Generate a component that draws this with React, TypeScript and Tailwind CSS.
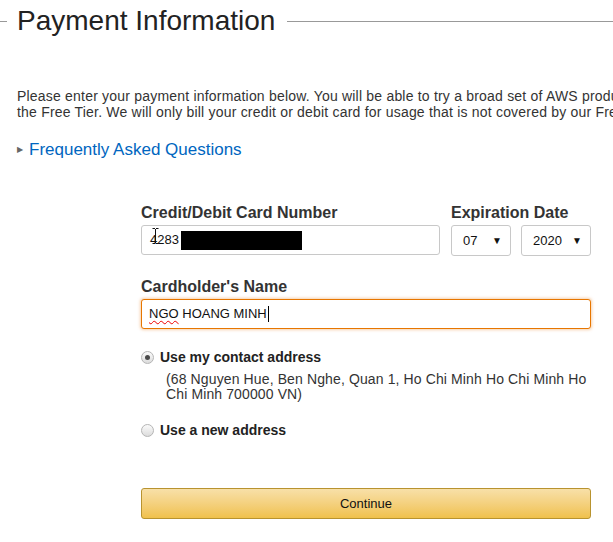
import React from "react";

function Radio({ checked }: { checked?: boolean }) {
  return (
    <span className="flex h-[13px] w-[13px] shrink-0 items-center justify-center rounded-full border border-[#b5b5b5] bg-gradient-to-b from-[#fbfbfb] to-[#dcdcdc]">
      {checked && <span className="h-[5px] w-[5px] rounded-full bg-[#4a4a4a]" />}
    </span>
  );
}

function SelectBox({ value, width }: { value: string; width: string }) {
  return (
    <div
      className={`flex h-[31px] items-center justify-between rounded-[3px] border border-[#c8c8c8] bg-white pl-[11px] pr-[8px] text-[13px] text-[#111] ${width}`}
    >
      <span>{value}</span>
      <span className="text-[10px] text-[#111]">▼</span>
    </div>
  );
}

export default function App() {
  return (
    <div className="h-[542px] w-[613px] overflow-hidden bg-white font-['Liberation_Sans',Arial,sans-serif] text-[#333]">
      <div className="flex items-center pt-[5px]">
        <div className="h-px w-[7px] bg-[#999]" />
        <h1 className="ml-[10px] text-[28px] leading-[32px] font-normal text-[#222]">
          Payment Information
        </h1>
        <div className="ml-[12px] h-px flex-1 bg-[#999]" />
      </div>

      <p className="mt-[51px] ml-[17px] w-[730px] text-[14px] leading-[16px] tracking-[0.2px] text-[#333]">
        Please enter your payment information below. You will be able to try a broad set of AWS
        products for free through the Free Tier. We will only bill your credit or debit card for
        usage that is not covered by our Free Tier.
      </p>

      <div className="mt-[20px] ml-[17px] flex items-center gap-[6px]">
        <span className="text-[8px] text-[#666]">▶</span>
        <a className="text-[17px] leading-[20px] text-[#0066c0]">Frequently Asked Questions</a>
      </div>

      <div className="mt-[44px] ml-[141px] w-[450px]">
        <div className="flex gap-[11px]">
          <div className="w-[300px]">
            <div className="text-[16px] leading-[18px] font-bold text-[#333]">
              Credit/Debit Card Number
            </div>
            <div className="relative mt-[3px] flex h-[30px] items-center rounded-[3px] border border-[#c8c8c8] bg-white pl-[8px] text-[13px] text-[#111]">
              <span>4283</span>
              <span className="ml-[2px] h-[19px] w-[121px] bg-black" />
              <svg className="absolute left-[10px] top-[2px]" width="7" height="16" viewBox="0 0 7 16">
                <path d="M0.5 0.5h2.5M4 0.5h2.5M3.5 1v14M0.5 15.5h2.5M4 15.5h2.5" stroke="#111" strokeWidth="1" fill="none" />
              </svg>
            </div>
          </div>
          <div className="flex-1">
            <div className="text-[16px] leading-[18px] font-bold text-[#333]">Expiration Date</div>
            <div className="mt-[3px] flex gap-[10px]">
              <SelectBox value="07" width="w-[60px]" />
              <SelectBox value="2020" width="w-[70px]" />
            </div>
          </div>
        </div>

        <div className="mt-[22px] text-[16px] leading-[18px] font-bold text-[#333]">
          Cardholder's Name
        </div>
        <div className="mt-[3px] flex h-[30px] items-center rounded-[3px] border border-[#e77600] bg-white pl-[7px] text-[13px] text-[#111] shadow-[0_0_3px_1px_rgba(228,121,17,0.35)]">
          <span className="underline decoration-[#e00] decoration-wavy decoration-1 underline-offset-2">
            NGO
          </span>
          <span>&nbsp;HOANG MINH</span>
          <span className="ml-[1px] h-[16px] w-px bg-black" />
        </div>

        <div className="mt-[19px] flex items-center gap-[6px]">
          <Radio checked />
          <span className="text-[14px] leading-[18px] font-bold text-[#222]">
            Use my contact address
          </span>
        </div>
        <p className="mt-[6px] ml-[25px] w-[428px] text-[14px] leading-[15px] tracking-[0.12px] text-[#333]">
          (68 Nguyen Hue, Ben Nghe, Quan 1, Ho Chi Minh Ho Chi Minh Ho Chi Minh 700000 VN)
        </p>

        <div className="mt-[19px] flex items-center gap-[6px]">
          <Radio />
          <span className="text-[14px] leading-[18px] font-bold text-[#222]">
            Use a new address
          </span>
        </div>

        <button className="mt-[49px] flex h-[31px] w-[450px] items-center justify-center rounded-[3px] border border-[#b8932f] bg-gradient-to-b from-[#f8e0a8] to-[#f0c14b] text-[13px] text-[#111]">
          Continue
        </button>
      </div>
    </div>
  );
}
